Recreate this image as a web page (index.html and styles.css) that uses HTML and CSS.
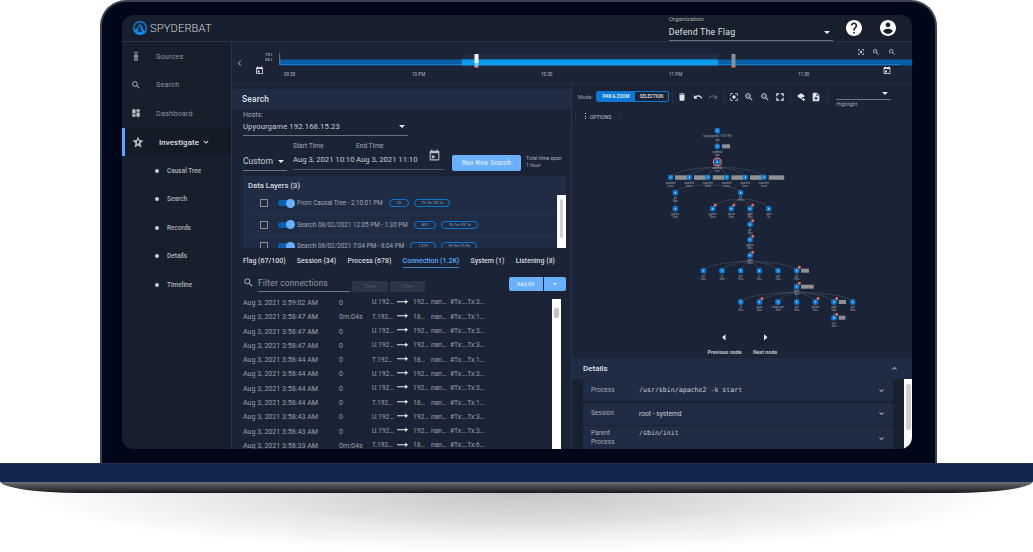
FILE: index.html
```html
<!DOCTYPE html>
<html lang="en">
<head>
    <meta charset="UTF-8">
    <title>Spyderbat</title>
    <link rel="stylesheet" href="styles.css">
</head>
<body>
    <svg class="defs" width="0" height="0">
        <symbol id="i-help" viewBox="2 2 20 20"><path d="M12 2C6.48 2 2 6.48 2 12s4.48 10 10 10 10-4.48 10-10S17.52 2 12 2zm1 17h-2v-2h2v2zm2.07-7.75l-.9.92C13.45 12.9 13 13.5 13 15h-2v-.5c0-1.1.45-2.1 1.17-2.83l1.24-1.26c.37-.36.59-.86.59-1.41 0-1.1-.9-2-2-2s-2 .9-2 2H8c0-2.21 1.79-4 4-4s4 1.79 4 4c0 .88-.36 1.68-.93 2.25z"/></symbol>
        <symbol id="i-account" viewBox="2 2 20 20"><path d="M12 2C6.48 2 2 6.48 2 12s4.48 10 10 10 10-4.48 10-10S17.52 2 12 2zm0 3c1.66 0 3 1.34 3 3s-1.34 3-3 3-3-1.34-3-3 1.34-3 3-3zm0 14.2c-2.5 0-4.71-1.28-6-3.22.03-1.99 4-3.08 6-3.08 1.99 0 5.97 1.09 6 3.08-1.29 1.94-3.5 3.22-6 3.22z"/></symbol>
        <symbol id="i-search" viewBox="0 0 24 24"><path d="M15.5 14h-.79l-.28-.27C15.41 12.59 16 11.11 16 9.5 16 5.91 13.09 3 9.5 3S3 5.91 3 9.5 5.91 16 9.5 16c1.61 0 3.09-.59 4.23-1.57l.27.28v.79l5 4.99L20.49 19l-4.99-5zm-6 0C7.01 14 5 11.99 5 9.5S7.01 5 9.5 5 14 7.01 14 9.5 11.99 14 9.5 14z"/></symbol>
        <symbol id="i-zoomin" viewBox="0 0 24 24"><path d="M15.5 14h-.79l-.28-.27C15.41 12.59 16 11.11 16 9.5 16 5.91 13.09 3 9.5 3S3 5.91 3 9.5 5.91 16 9.5 16c1.61 0 3.09-.59 4.23-1.57l.27.28v.79l5 4.99L20.49 19l-4.99-5zm-6 0C7.01 14 5 11.99 5 9.5S7.01 5 9.5 5 14 7.01 14 9.5 11.99 14 9.5 14zM12 10h-2v2H9v-2H7V9h2V7h1v2h2v1z"/></symbol>
        <symbol id="i-zoomout" viewBox="0 0 24 24"><path d="M15.5 14h-.79l-.28-.27C15.41 12.59 16 11.11 16 9.5 16 5.91 13.09 3 9.5 3S3 5.91 3 9.5 5.91 16 9.5 16c1.61 0 3.09-.59 4.23-1.57l.27.28v.79l5 4.99L20.49 19l-4.99-5zm-6 0C7.01 14 5 11.99 5 9.5S7.01 5 9.5 5 14 7.01 14 9.5 11.99 14 9.5 14zM7 9h5v1H7z"/></symbol>
        <symbol id="i-fit" viewBox="0 0 24 24"><path d="M5 15H3v4c0 1.1.9 2 2 2h4v-2H5v-4zM5 5h4V3H5c-1.1 0-2 .9-2 2v4h2V5zm14-2h-4v2h4v4h2V5c0-1.1-.9-2-2-2zm0 16h-4v2h4c1.1 0 2-.9 2-2v-4h-2v4zM12 8c-2.2 0-4 1.8-4 4s1.8 4 4 4 4-1.8 4-4-1.8-4-4-4z"/></symbol>
        <symbol id="i-expand" viewBox="0 0 24 24"><path d="M3 3h7v3H6v4H3V3zm11 0h7v7h-3V6h-4V3zM3 14h3v4h4v3H3v-7zm15 0h3v7h-7v-3h4v-4z"/></symbol>
        <symbol id="i-event" viewBox="0 0 24 24"><path d="M7 12h5v5H7zM16 1v2H8V1H6v2H5c-1.11 0-1.99.9-1.99 2L3 19c0 1.1.89 2 2 2h14c1.1 0 2-.9 2-2V5c0-1.1-.9-2-2-2h-1V1h-2zm3 18H5V8h14v11z"/></symbol>
        <symbol id="i-trash" viewBox="0 0 24 24"><path d="M6 19c0 1.1.9 2 2 2h8c1.1 0 2-.9 2-2V7H6v12zM19 4h-3.5l-1-1h-5l-1 1H5v2h14V4z"/></symbol>
        <symbol id="i-undo" viewBox="0 0 24 24"><path d="M12.5 8c-2.65 0-5.05.99-6.9 2.6L2 7v9h9l-3.62-3.62c1.39-1.16 3.16-1.88 5.12-1.88 3.54 0 6.55 2.31 7.6 5.5l2.37-.78C21.08 11.03 17.15 8 12.5 8z"/></symbol>
        <symbol id="i-redo" viewBox="0 0 24 24"><path d="M18.4 10.6C16.55 8.99 14.15 8 11.5 8c-4.65 0-8.58 3.03-9.96 7.22L3.9 16c1.05-3.19 4.05-5.5 7.6-5.5 1.95 0 3.73.72 5.12 1.88L13 16h9V7l-3.6 3.6z"/></symbol>
        <symbol id="i-layer" viewBox="0 0 24 24"><path d="M12 3l8 5v4h-5v4h-3l-8-4V8zM17 14h2v3h3v2h-3v3h-2v-3h-3v-2h3z"/></symbol>
        <symbol id="i-doc" viewBox="0 0 24 24"><path d="M14 2H6c-1.1 0-1.99.9-1.99 2L4 20c0 1.1.89 2 1.99 2H18c1.1 0 2-.9 2-2V8l-6-6zm2 14h-3v3h-2v-3H8v-2h3v-3h2v3h3v2zm-3-7V3.5L18.5 9H13z"/></symbol>
        <symbol id="i-dash" viewBox="0 0 24 24"><path d="M3 13h8V3H3v10zm0 8h8v-6H3v6zm10 0h8V11h-8v10zm0-18v6h8V3h-8z"/></symbol>
        <symbol id="i-down" viewBox="0 0 24 24"><path d="M16.59 8.59L12 13.17 7.41 8.59 6 10l6 6 6-6z"/></symbol>
        <symbol id="i-up" viewBox="0 0 24 24"><path d="M12 8l-6 6 1.41 1.41L12 10.83l4.59 4.58L18 14z"/></symbol>
        <symbol id="i-arrow" viewBox="0 0 24 12"><path d="M0 5h18V1l6 5-6 5V7H0z"/></symbol>
        <symbol id="i-sources" viewBox="0 0 24 24"><path d="M8 8h8v15H8zM10.5 10v3h3v-3zM10.5 15v6h3v-6zM12 4c-2 0-3.6.6-4.8 1.6l-1-1C7.8 3.2 9.8 2.5 12 2.5s4.2.7 5.8 2.1l-1 1C15.6 4.6 14 4 12 4z"/></symbol>
        <symbol id="i-star" viewBox="0 0 24 24"><path d="M12 1l3 7 8 1-6 5.5L19 23l-7-4-7 4 2-8.5L1 9l8-1zM12 7l-2.5 5 2.5 5 2.5-5z"/></symbol>
        <symbol id="i-node" viewBox="-3 -3 6 6"><circle r="2.9" fill="#0a78d4"/><circle r=".8" fill="#cfe6fb"/></symbol>
    </svg>

    <div class="lid">
        <div class="screen">
            <header class="topbar">
                <svg class="logo" viewBox="0 0 24 24">
                    <circle cx="12" cy="12" r="12" fill="#0a8ae6"/>
                    <circle cx="12" cy="12" r="10" fill="#12263f"/>
                    <path fill="#0a8ae6" d="M2 14c3 1 5-1 6-3l4-8 1 4 4 3-1 3 4 5 3 0c-2 4-6 6-11 6-6 0-9-4-10-10z"/>
                    <path fill="#12263f" d="M11 7l1 3 2 1-1 3 3 4-6 1-2-3 2-5z"/>
                </svg>
                <span class="brand">SPYDERBAT</span>
                <div class="org">
                    <span class="org-label">Organization</span>
                    <div class="org-select">Defend The Flag<i class="caret"></i></div>
                </div>
                <svg class="top-ic help"><use href="#i-help"/></svg>
                <svg class="top-ic account"><use href="#i-account"/></svg>
            </header>

            <div class="body">
                <nav class="side">
                    <a class="nav"><svg class="nav-ic"><use href="#i-sources"/></svg>Sources</a>
                    <a class="nav"><svg class="nav-ic"><use href="#i-search"/></svg>Search</a>
                    <a class="nav"><svg class="nav-ic"><use href="#i-dash"/></svg>Dashboard</a>
                    <a class="nav active"><svg class="nav-ic"><use href="#i-star"/></svg>Investigate<svg class="nav-chev"><use href="#i-down"/></svg></a>
                    <a class="sub">Causal Tree</a>
                    <a class="sub">Search</a>
                    <a class="sub">Records</a>
                    <a class="sub">Details</a>
                    <a class="sub">Timeline</a>
                </nav>

                <main class="main">
                    <svg class="timeline" viewBox="232 41 680 42">
                        <rect x="462" y="53" width="256" height="5" fill="#1f2c44"/>
                        <rect x="280" y="58.5" width="632" height="6" fill="#065ea8"/>
                        <rect x="462" y="58.5" width="256" height="6" fill="#0b9df0"/>
                        <rect x="280" y="63" width="620" height=".6" fill="#3a8fd6"/>
                        <rect x="279.5" y="52" width=".6" height="12" fill="#aab2bd"/>
                        <rect x="474.5" y="53" width="4" height="9" fill="#f4f6f8"/>
                        <rect x="474.5" y="62" width="4" height="4" fill="#7fc4f0"/>
                        <rect x="474.5" y="65.5" width="4" height="1.2" fill="#e8705f"/>
                        <rect x="731.5" y="53" width="4" height="12" fill="#8a8f98"/>
                        <rect x="731.5" y="65" width="4" height="1.5" fill="#e8705f"/>
                        <rect x="232" y="82.5" width="680" height=".8" fill="#2a3648"/>
                        <text class="tl-y" x="265" y="54.6">70 I</text>
                        <text class="tl-y" x="265" y="60">35 I</text>
                        <text class="tl-x" x="284" y="74.8">09:30</text>
                        <text class="tl-x" x="412" y="74.8">10 PM</text>
                        <text class="tl-x" x="541" y="74.8">10:30</text>
                        <text class="tl-x" x="669" y="74.8">11 PM</text>
                        <text class="tl-x" x="798" y="74.8">11:30</text>
                        <path class="tl-back" d="M240.8 59.8L238.4 62.2L240.8 64.6"/>
                        <use href="#i-event" class="ic-w" x="255" y="65" width="9" height="9"/>
                        <use href="#i-event" class="ic-w" x="882.5" y="65" width="9" height="9"/>
                        <use href="#i-fit" class="ic-g" x="857" y="47" width="8" height="8"/>
                        <use href="#i-zoomin" class="ic-g" x="872" y="47" width="8" height="8"/>
                        <use href="#i-zoomout" class="ic-g" x="888" y="47" width="8" height="8"/>
                    </svg>

                    <div class="work">
                        <section class="search">
                            <h2 class="band">Search</h2>
                            <div class="pad">
                                <label class="hosts-label">Hosts:</label>
                                <div class="hosts">Upyourgame 192.168.15.23<i class="caret"></i></div>
                                <div class="range">
                                    <div class="custom">Custom<i class="caret"></i></div>
                                    <div class="dates">
                                        <div class="date-labels"><span>Start Time</span><span>End Time</span></div>
                                        <div class="date-values"><span>Aug 3, 2021 10:10</span><span>Aug 3, 2021 11:10</span><svg class="cal"><use href="#i-event"/></svg></div>
                                    </div>
                                    <button class="run">Run New Search</button>
                                    <div class="span-note">Total time span<br>1 hour</div>
                                </div>
                                <div class="layers">
                                    <div class="layers-title">Data Layers (3)</div>
                                    <div class="layers-body">
                                        <div class="layer-list">
                                            <div class="layer"><i class="check"></i><i class="toggle"></i><span>From Causal Tree - 2:10:01 PM</span><b class="pill count">25</b><b class="pill">7h 7m 33.1s</b></div>
                                            <div class="layer"><i class="check"></i><i class="toggle"></i><span>Search 08/02/2021 12:05 PM - 1:30 PM</span><b class="pill count">857</b><b class="pill">7h 7m 33.1s</b></div>
                                            <div class="layer"><i class="check"></i><i class="toggle"></i><span>Search 08/02/2021 7:04 PM - 8:04 PM</span><b class="pill count">1,329</b><b class="pill">7h 9m 15.9s</b></div>
                                        </div>
                                        <div class="scroll"><i class="thumb-long"></i></div>
                                    </div>
                                </div>
                                <div class="tabs">
                                    <a>Flag (67/100)</a><a>Session (34)</a><a>Process (678)</a><a class="on">Connection (1.2K)</a><a>System (1)</a><a>Listening (8)</a>
                                </div>
                                <div class="filter">
                                    <svg class="filter-ic"><use href="#i-search"/></svg>
                                    <div class="filter-input">Filter connections</div>
                                    <button class="ghost">Save</button>
                                    <button class="ghost">Clear</button>
                                    <div class="add"><button>Add All</button><button class="add-more"><i class="caret"></i></button></div>
                                </div>
                                <div class="conns">
                                    <div class="conn-list">
                                        <div class="conn"><span>Aug 3, 2021 3:59:02 AM</span><span>0</span><span>U.192…</span><svg class="arrow"><use href="#i-arrow"/></svg><span>192…</span><span>nan…</span><span>#Tx:…Tx:3…</span></div>
                                        <div class="conn"><span>Aug 3, 2021 3:58:47 AM</span><span>0m:04s</span><span>T.192…</span><svg class="arrow"><use href="#i-arrow"/></svg><span>18…</span><span>nan…</span><span>#Tx:…Tx:1…</span></div>
                                        <div class="conn"><span>Aug 3, 2021 3:58:47 AM</span><span>0</span><span>U.192…</span><svg class="arrow"><use href="#i-arrow"/></svg><span>192…</span><span>nan…</span><span>#Tx:…Tx:3…</span></div>
                                        <div class="conn"><span>Aug 3, 2021 3:58:47 AM</span><span>0</span><span>U.192…</span><svg class="arrow"><use href="#i-arrow"/></svg><span>192…</span><span>nan…</span><span>#Tx:…Tx:3…</span></div>
                                        <div class="conn"><span>Aug 3, 2021 3:58:44 AM</span><span>0</span><span>T.192…</span><svg class="arrow"><use href="#i-arrow"/></svg><span>18…</span><span>nan…</span><span>#Tx:…Tx:1…</span></div>
                                        <div class="conn"><span>Aug 3, 2021 3:58:44 AM</span><span>0</span><span>U.192…</span><svg class="arrow"><use href="#i-arrow"/></svg><span>192…</span><span>nan…</span><span>#Tx:…Tx:3…</span></div>
                                        <div class="conn"><span>Aug 3, 2021 3:58:44 AM</span><span>0</span><span>U.192…</span><svg class="arrow"><use href="#i-arrow"/></svg><span>192…</span><span>nan…</span><span>#Tx:…Tx:3…</span></div>
                                        <div class="conn"><span>Aug 3, 2021 3:58:44 AM</span><span>0</span><span>T.192…</span><svg class="arrow"><use href="#i-arrow"/></svg><span>18…</span><span>nan…</span><span>#Tx:…Tx:1…</span></div>
                                        <div class="conn"><span>Aug 3, 2021 3:58:43 AM</span><span>0</span><span>U.192…</span><svg class="arrow"><use href="#i-arrow"/></svg><span>192…</span><span>nan…</span><span>#Tx:…Tx:3…</span></div>
                                        <div class="conn"><span>Aug 3, 2021 3:58:43 AM</span><span>0</span><span>U.192…</span><svg class="arrow"><use href="#i-arrow"/></svg><span>192…</span><span>nan…</span><span>#Tx:…Tx:3…</span></div>
                                        <div class="conn"><span>Aug 3, 2021 3:58:33 AM</span><span>0m:04s</span><span>T.192…</span><svg class="arrow"><use href="#i-arrow"/></svg><span>18…</span><span>nan…</span><span>#Tx:…Tx:6…</span></div>
                                    </div>
                                    <div class="conn-scroll"><i class="thumb-short"></i></div>
                                </div>
                            </div>
                        </section>

                        <section class="graph">
                            <div class="toolbar">
                                <span class="mode-label">Mode:</span>
                                <div class="mode"><span class="mode-on">PAN &amp; ZOOM</span><span>SELECTION</span></div>
                                <i class="tsep"></i>
                                <span class="tbtn"><svg><use href="#i-trash"/></svg></span>
                                <span class="tbtn"><svg><use href="#i-undo"/></svg></span>
                                <span class="tbtn dim"><svg><use href="#i-redo"/></svg></span>
                                <i class="tsep"></i>
                                <span class="tbtn"><svg><use href="#i-fit"/></svg></span>
                                <span class="tbtn"><svg><use href="#i-zoomin"/></svg></span>
                                <span class="tbtn"><svg><use href="#i-zoomout"/></svg></span>
                                <span class="tbtn"><svg><use href="#i-expand"/></svg></span>
                                <i class="tsep"></i>
                                <span class="tbtn"><svg><use href="#i-layer"/></svg></span>
                                <span class="tbtn"><svg><use href="#i-doc"/></svg></span>
                                <i class="tsep"></i>
                                <div class="highlight"><div class="hl-select"><i class="caret"></i></div><span>Highlight</span></div>
                            </div>
                            <div class="options"><span class="opt-box"><i class="dots"></i>OPTIONS</span></div>

                            <svg class="tree" viewBox="572 124 340 233">
                                <g class="edges">
                                    <path d="M717.3 130V161"/>
                                    <path d="M717.3 166Q680 167 670.7 176"/>
                                    <path d="M717.3 166Q695 168 689.3 176"/>
                                    <path d="M717.3 166Q710 168 708 176"/>
                                    <path d="M717.3 166Q724 168 726.7 176"/>
                                    <path d="M717.3 166Q740 168 745.3 176"/>
                                    <path d="M717.3 166Q755 167 764 176"/>
                                    <path d="M708 184Q680 184 675.3 191.7"/>
                                    <path d="M708 184Q735 184 740.7 191.7"/>
                                    <path d="M675.3 192V207.7"/>
                                    <path d="M740.7 198Q716 199 712.7 207.7"/>
                                    <path d="M740.7 198Q733 200 731.3 207.7"/>
                                    <path d="M740.7 198Q748 200 750 207.7"/>
                                    <path d="M740.7 198Q765 199 768.7 207.7"/>
                                    <path d="M750 208V254"/>
                                    <path d="M750 260Q708 262 703.3 269.7"/>
                                    <path d="M750 260Q725 263 722 269.7"/>
                                    <path d="M750 260Q742 264 740.7 269.7"/>
                                    <path d="M750 260Q757 264 759.3 269.7"/>
                                    <path d="M750 260Q775 263 778 269.7"/>
                                    <path d="M750 260Q790 262 796.7 269.7"/>
                                    <path d="M796.7 270V285.7"/>
                                    <path d="M796.7 291Q746 293 740.7 301"/>
                                    <path d="M796.7 291Q763 294 759.3 301"/>
                                    <path d="M796.7 291Q781 295 778 301"/>
                                    <path d="M796.7 291V301"/>
                                    <path d="M796.7 291Q812 295 815.3 301"/>
                                    <path d="M796.7 291Q830 294 834 301"/>
                                    <path d="M796.7 291Q848 293 852.7 301"/>
                                    <path d="M834 301V316.7"/>
                                </g>

                                <circle cx="717.3" cy="161" r="3.9" fill="none" stroke="#e8705f" stroke-width="1.3"/>

                                <g class="tags">
                                    <rect x="722" y="143.3" width="8" height="4"/>
                                    <rect x="675" y="174.3" width="13" height="4.5"/>
                                    <rect x="694" y="174.3" width="12.5" height="4.5"/>
                                    <rect x="712.7" y="174.3" width="12.5" height="4.5"/>
                                    <rect x="731.3" y="174.3" width="12.5" height="4.5"/>
                                    <rect x="750" y="174.3" width="12.5" height="4.5"/>
                                    <rect x="768.7" y="174.3" width="15.5" height="4.5"/>
                                    <rect x="801" y="267.7" width="8" height="4"/>
                                    <rect x="801" y="283.7" width="12.7" height="4"/>
                                    <rect x="838.7" y="299" width="7.3" height="4"/>
                                    <rect x="838.7" y="314.7" width="6.7" height="4"/>
                                </g>

                                <g class="nodes">
                                    <use href="#i-node" x="714.3" y="126.7" width="6" height="6"/>
                                    <use href="#i-node" x="714.3" y="142.3" width="6" height="6"/>
                                    <use href="#i-node" x="714.3" y="158" width="6" height="6"/>
                                    <use href="#i-node" x="667.7" y="173.3" width="6" height="6"/>
                                    <use href="#i-node" x="686.3" y="173.3" width="6" height="6"/>
                                    <use href="#i-node" x="705" y="173.3" width="6" height="6"/>
                                    <use href="#i-node" x="723.7" y="173.3" width="6" height="6"/>
                                    <use href="#i-node" x="742.3" y="173.3" width="6" height="6"/>
                                    <use href="#i-node" x="761" y="173.3" width="6" height="6"/>
                                    <use href="#i-node" x="672.3" y="188.7" width="6" height="6"/>
                                    <use href="#i-node" x="737.7" y="188.7" width="6" height="6"/>
                                    <use href="#i-node" x="672.3" y="204.7" width="6" height="6"/>
                                    <use href="#i-node" x="709.7" y="204.7" width="6" height="6"/>
                                    <use href="#i-node" x="728.3" y="204.7" width="6" height="6"/>
                                    <use href="#i-node" x="747" y="204.7" width="6" height="6"/>
                                    <use href="#i-node" x="765.7" y="204.7" width="6" height="6"/>
                                    <use href="#i-node" x="747" y="220.3" width="6" height="6"/>
                                    <use href="#i-node" x="747" y="235.7" width="6" height="6"/>
                                    <use href="#i-node" x="747" y="251.3" width="6" height="6"/>
                                    <use href="#i-node" x="700.3" y="266.7" width="6" height="6"/>
                                    <use href="#i-node" x="719" y="266.7" width="6" height="6"/>
                                    <use href="#i-node" x="737.7" y="266.7" width="6" height="6"/>
                                    <use href="#i-node" x="756.3" y="266.7" width="6" height="6"/>
                                    <use href="#i-node" x="775" y="266.7" width="6" height="6"/>
                                    <use href="#i-node" x="793.7" y="266.7" width="6" height="6"/>
                                    <use href="#i-node" x="793.7" y="282.7" width="6" height="6"/>
                                    <use href="#i-node" x="737.7" y="298" width="6" height="6"/>
                                    <use href="#i-node" x="756.3" y="298" width="6" height="6"/>
                                    <use href="#i-node" x="775" y="298" width="6" height="6"/>
                                    <use href="#i-node" x="793.7" y="298" width="6" height="6"/>
                                    <use href="#i-node" x="812.3" y="298" width="6" height="6"/>
                                    <use href="#i-node" x="831" y="298" width="6" height="6"/>
                                    <use href="#i-node" x="849.7" y="298" width="6" height="6"/>
                                    <use href="#i-node" x="831" y="313.7" width="6" height="6"/>
                                </g>

                                <g class="flags">
                                    <rect x="714" y="202.8" width="2.6" height="2.6"/>
                                    <rect x="732.6" y="202.8" width="2.6" height="2.6"/>
                                    <rect x="751.4" y="202.8" width="2.6" height="2.6"/>
                                    <rect x="751.4" y="218.4" width="2.6" height="2.6"/>
                                    <rect x="751.4" y="234" width="2.6" height="2.6"/>
                                    <rect x="751.4" y="250" width="2.6" height="2.6"/>
                                    <rect x="798" y="265" width="2.6" height="2.6"/>
                                    <rect x="798" y="281" width="2.6" height="2.6"/>
                                    <rect x="760.7" y="296.2" width="2.6" height="2.6"/>
                                    <rect x="816.7" y="296.2" width="2.6" height="2.6"/>
                                    <rect x="835.4" y="296.2" width="2.6" height="2.6"/>
                                    <rect x="835.4" y="312" width="2.6" height="2.6"/>
                                </g>

                                <g class="labels">
                                    <text x="717.3" y="136">Upyourgame 2:10:01 PM</text><text x="717.3" y="139.5">root</text>
                                    <text x="717.3" y="151.5">systemd</text><text x="717.3" y="155">root</text>
                                    <text x="717.3" y="167.5">apache2</text><text x="717.3" y="170.5">root</text>
                                    <text x="670.7" y="182.5">apache2</text><text x="670.7" y="185.5">www</text>
                                    <text x="689.3" y="182.5">apache2</text><text x="689.3" y="185.5">www</text>
                                    <text x="708" y="182.5">apache2</text><text x="708" y="185.5">www</text>
                                    <text x="726.7" y="182.5">apache2</text><text x="726.7" y="185.5">www</text>
                                    <text x="745.3" y="182.5">apache2</text><text x="745.3" y="185.5">www</text>
                                    <text x="764" y="182.5">apache2</text><text x="764" y="185.5">www</text>
                                    <text x="675.3" y="198">sh</text><text x="675.3" y="201">0hrs</text>
                                    <text x="740.7" y="197">sh</text><text x="740.7" y="200">0hrs</text>
                                    <text x="675.3" y="214">python</text><text x="675.3" y="217">0hrs</text>
                                    <text x="712.7" y="214">python</text><text x="712.7" y="217">0hrs</text>
                                    <text x="731.3" y="214">netcat</text><text x="731.3" y="217">0hrs</text>
                                    <text x="750" y="213.5">wget</text><text x="750" y="216.5">0hrs</text>
                                    <text x="768.7" y="214">cron</text><text x="768.7" y="217">0s</text>
                                    <text x="750" y="229.5">sh</text><text x="750" y="232.5">0hrs</text>
                                    <text x="750" y="245">python</text><text x="750" y="248">0hrs</text>
                                    <text x="750" y="260">bash</text><text x="750" y="263">0hrs</text>
                                    <text x="703.3" y="276">ctf</text><text x="703.3" y="279">0hrs</text>
                                    <text x="722" y="276">ls</text><text x="722" y="279">0hrs</text>
                                    <text x="740.7" y="276">cat</text><text x="740.7" y="279">0hrs</text>
                                    <text x="759.3" y="276">ls</text><text x="759.3" y="279">0hrs</text>
                                    <text x="778" y="276">cat</text><text x="778" y="279">0hrs</text>
                                    <text x="796.7" y="276">su</text><text x="796.7" y="279">0hrs</text>
                                    <text x="796.7" y="291">bash</text><text x="796.7" y="294">0hrs</text>
                                    <text x="740.7" y="307">id</text><text x="740.7" y="310">0hrs</text>
                                    <text x="759.3" y="307">sudo</text><text x="759.3" y="310">0hrs</text>
                                    <text x="778" y="307">netcat-gen</text><text x="778" y="310">0hrs</text>
                                    <text x="796.7" y="307">cat</text><text x="796.7" y="310">0hrs</text>
                                    <text x="815.3" y="307">chmod</text><text x="815.3" y="310">0hrs</text>
                                    <text x="834" y="307">sudo</text><text x="834" y="310">0hrs</text>
                                    <text x="852.7" y="307">cat</text><text x="852.7" y="310">0hrs</text>
                                    <text x="834" y="323">su</text><text x="834" y="326">0hrs</text>
                                </g>

                                <path class="step" d="M725.5 333.2V339.4L722 336.3z"/>
                                <path class="step" d="M764 333.2V339.4L767.5 336.3z"/>
                                <text class="step-label" x="724.5" y="353">Previous node</text>
                                <text class="step-label" x="765" y="353">Next node</text>
                            </svg>

                            <div class="details-head"><span>Details</span><svg><use href="#i-up"/></svg></div>
                            <div class="details">
                                <div class="detail-list">
                                    <div class="detail"><span class="d-key">Process</span><code class="d-val">/usr/sbin/apache2 -k start</code><svg><use href="#i-down"/></svg></div>
                                    <div class="detail"><span class="d-key">Session</span><span class="d-val">root - systemd</span><svg><use href="#i-down"/></svg></div>
                                    <div class="detail tall"><span class="d-key">Parent<br>Process</span><code class="d-val top">/sbin/init</code><svg><use href="#i-down"/></svg></div>
                                </div>
                                <div class="detail-scroll"><i class="thumb-detail"></i></div>
                            </div>
                        </section>
                    </div>
                </main>
            </div>
        </div>
    </div>
    <div class="base"></div>
    <div class="floor"></div>
</body>
</html>
```

FILE: styles.css
```css
* {
    box-sizing: border-box;
}
html, body {
    height: 552px;
}
body {
    margin: 0;
    background: #FFFFFF;
    font-family: Roboto, sans-serif;
    overflow: hidden;
    color: #D5D9DE;
}
i {
    display: block;
}
.defs {
    display: block;
    height: 0;
}
.caret {
    width: 0;
    height: 0;
    border-left: 3px solid transparent;
    border-right: 3px solid transparent;
    border-top: 3px solid #E8EAED;
}

/* laptop shell */
.lid {
    width: 837px;
    height: 463px;
    margin-left: 100px;
    padding: 13px 23px 14px 20px;
    background: #01071A;
    border: 2px solid #3B4353;
    border-bottom: none;
    border-radius: 26px 26px 0 0;
}
.base {
    height: 30px;
    background: linear-gradient(#2A3A5E 0, #12264F 1px, #12264F 18.5px, #6C7076 19px, #16181C 30px);
    border-radius: 0 0 80px 80px / 0 0 12px 12px;
}
.floor {
    height: 59px;
    background:
        radial-gradient(ellipse 24% 65% at 50% 0, rgba(0, 0, 0, 0.1), rgba(0, 0, 0, 0) 100%),
        radial-gradient(ellipse 48% 100% at 50% 0, rgba(0, 0, 0, 0.14), rgba(0, 0, 0, 0.11) 50%, rgba(0, 0, 0, 0) 100%);
}
.screen {
    height: 434px;
    display: flex;
    flex-direction: column;
    background: #1A2436;
    border-radius: 12px;
    overflow: hidden;
}

/* top bar */
.topbar {
    flex: 0 0 26px;
    display: flex;
    align-items: center;
    padding: 0 15.5px 0 11px;
    background: #171F2C;
    border-bottom: 1px solid #2A3648;
}
.logo {
    width: 14px;
    height: 14px;
}
.brand {
    margin-left: 3px;
    font-size: 11.2px;
    letter-spacing: 0.1px;
    font-weight: 300;
    color: #D0D3D8;
}
.org {
    width: 164px;
    margin-left: 457px;
    align-self: flex-start;
}
.org-label {
    display: block;
    font-size: 6.2px;
    line-height: 8px;
    color: #A9AEB6;
}
.org-select {
    display: flex;
    align-items: center;
    justify-content: space-between;
    height: 18px;
    padding: 1px 3px 0 0;
    font-size: 8.8px;
    letter-spacing: 0.2px;
    border-bottom: 1px solid #6B7280;
    color: #DDE0E4;
}
.top-ic {
    width: 16px;
    height: 16px;
    fill: #FFFFFF;
}
.help {
    margin-left: 13px;
}
.account {
    margin-left: 18.5px;
}

.body {
    flex: 1;
    display: flex;
    min-height: 0;
}

/* sidebar */
.side {
    flex: 0 0 110px;
    background: #171F2C;
    border-right: 1px solid #2A3648;
}
.nav, .sub {
    display: flex;
    align-items: center;
    height: 28.6px;
}
.nav {
    padding-left: 9px;
    font-size: 7.4px;
    letter-spacing: 0.1px;
    color: #8D939C;
}
.nav-ic {
    width: 10px;
    height: 10px;
    margin-right: 15px;
    fill: #B9BDC4;
}
.nav.active {
    background: #141B27;
    border-left: 3px solid #5AA7FF;
    padding-left: 8px;
    font-size: 7.9px;
    color: #DDE0E4;
    font-weight: 500;
}
.nav.active .nav-ic {
    width: 12px;
    height: 12px;
    margin: 0 15px 0 -1px;
}
.nav-chev {
    width: 10px;
    height: 10px;
    margin-left: 2px;
    fill: #DDE0E4;
}
.sub {
    padding-left: 33px;
    font-size: 6.5px;
    font-weight: 500;
    color: #AEB3BA;
}
.sub::before {
    content: '';
    width: 4px;
    height: 4px;
    margin-right: 8px;
    border-radius: 50%;
    background: #C9CDD2;
}

/* main column */
.main {
    flex: 1;
    display: flex;
    flex-direction: column;
    min-width: 0;
}
.timeline {
    display: block;
    flex: 0 0 42px;
    width: 680px;
    height: 42px;
}
.tl-y {
    font-size: 4.4px;
    fill: #D0D3D8;
}
.tl-x {
    font-size: 4.6px;
    fill: #B8BCC2;
}
.tl-back {
    fill: none;
    stroke: #E8EAED;
    stroke-width: 0.8;
}
.ic-w {
    fill: #E8EAED;
}
.ic-g {
    fill: #C2C6CC;
}
.work {
    flex: 1;
    display: flex;
    min-height: 0;
}

/* search panel */
.search {
    flex: 0 0 340px;
    padding-top: 5px;
    border-right: 1px solid #2A3648;
    overflow: hidden;
}
.band {
    height: 20px;
    margin: 0;
    padding-left: 10px;
    background: #1F2C44;
    font-size: 8.4px;
    font-weight: 500;
    letter-spacing: 0.2px;
    line-height: 20px;
    color: #DFE3E8;
}
.pad {
    padding: 1.5px 5.5px 0 11px;
}
.hosts-label {
    display: block;
    font-size: 6.8px;
    line-height: 8px;
    color: #A9AEB6;
}
.hosts {
    display: flex;
    align-items: center;
    justify-content: space-between;
    width: 164.5px;
    height: 14.5px;
    margin-top: 2.5px;
    padding: 0 3px 2px 0;
    font-size: 7.7px;
    letter-spacing: 0.1px;
    border-bottom: 1px solid #6B7280;
    color: #C9CDD3;
}
.range {
    display: flex;
    align-items: flex-end;
    margin-top: 6px;
    height: 29px;
}
.custom {
    display: flex;
    align-items: center;
    justify-content: space-between;
    width: 44px;
    height: 18px;
    padding: 0 3px 0 0;
    font-size: 8.6px;
    border-bottom: 1px solid #6B7280;
    color: #C9CDD3;
}
.dates {
    width: 151px;
    margin: 0 0 1px 6px;
}
.date-labels {
    display: flex;
    font-size: 6.6px;
    line-height: 8px;
    color: #A9AEB6;
}
.date-labels span, .date-values span {
    width: 63px;
}
.date-values {
    display: flex;
    align-items: center;
    height: 20px;
    font-size: 7.7px;
    white-space: nowrap;
    border-bottom: 1px solid #4A5566;
    color: #C9CDD3;
}
.cal {
    width: 13px;
    height: 13px;
    margin: -8px 0 0 9px;
    fill: #B9BDC4;
}
.run {
    width: 69px;
    height: 16px;
    margin: 0 0 0 8px;
    padding: 0;
    border: none;
    border-radius: 2px;
    background: #6AB0FF;
    color: #CFE4FF;
    font: 700 6.3px Roboto, sans-serif;
    letter-spacing: 0.2px;
}
.span-note {
    margin: 0 0 1px 5px;
    font-size: 5.2px;
    line-height: 7.5px;
    color: #A9AEB6;
    white-space: nowrap;
}
.layers {
    height: 72px;
    margin-top: 5px;
    background: #1F2C44;
    overflow: hidden;
}
.layers-title {
    height: 17.5px;
    padding: 5px 0 0 5px;
    font-size: 7.7px;
    line-height: 9px;
    font-weight: 500;
    color: #D5D9DE;
}
.layers-body {
    display: flex;
}
.layer-list {
    flex: 1;
}
.layer {
    display: flex;
    align-items: center;
    height: 21.5px;
    margin-left: 7px;
    padding-left: 10px;
    font-size: 6.3px;
    color: #A3A8B0;
    white-space: nowrap;
    border-bottom: 1px solid #263450;
}
.check {
    width: 8px;
    height: 8px;
    margin-right: 10px;
    border: 1px solid #8C9199;
}
.toggle {
    position: relative;
    width: 16px;
    height: 6px;
    margin-right: 3px;
    border-radius: 3px;
    background: #0B5FB0;
}
.toggle::after {
    content: '';
    position: absolute;
    right: -1px;
    top: -1.5px;
    width: 9px;
    height: 9px;
    border-radius: 50%;
    background: #6AB0FF;
}
.pill {
    height: 8px;
    margin-left: 5px;
    padding: 0 6px;
    border: 0.7px solid #0A78D4;
    border-radius: 4px;
    font-size: 4px;
    font-weight: 400;
    line-height: 6.6px;
    color: #7FA9D6;
}
.pill.count {
    margin-left: 6px;
    padding: 0 7px;
}
.scroll {
    flex: 0 0 9px;
    height: 60px;
    margin-top: 1.5px;
    padding: 4px 2.5px 0 3px;
    background: #FFFFFF;
}
.thumb-long {
    height: 39px;
    border-radius: 2px;
    background: #CDCFD2;
}
.tabs {
    display: flex;
    gap: 11.2px;
    height: 13px;
    margin-top: 7px;
    font-size: 7px;
    font-weight: 500;
    line-height: 12px;
    color: #D5D9DE;
    white-space: nowrap;
}
.tabs .on {
    color: #5AA7FF;
    border-bottom: 1px solid #3B7FC4;
}
.filter {
    display: flex;
    align-items: flex-start;
    height: 15px;
    margin-top: 9px;
}
.filter-ic {
    width: 11px;
    height: 11px;
    fill: #C2C6CC;
}
.filter-input {
    width: 92px;
    height: 15px;
    margin-left: 4px;
    font-size: 8.4px;
    line-height: 13px;
    letter-spacing: 0.2px;
    color: #94999F;
    border-bottom: 1px solid #6B7280;
}
.ghost {
    width: 36px;
    height: 11px;
    margin: 4px 0 0 2px;
    padding: 0;
    border: none;
    border-radius: 2px;
    background: #2A3648;
    color: #445063;
    font: 500 5px Roboto, sans-serif;
}
.ghost + .ghost {
    width: 35px;
}
.add {
    display: flex;
    margin-left: auto;
    gap: 1px;
}
.add button {
    width: 34px;
    height: 14.5px;
    padding: 0;
    border: none;
    border-radius: 2px 0 0 2px;
    background: #6AB0FF;
    color: #CFE4FF;
    font: 700 5.4px Roboto, sans-serif;
}
.add .add-more {
    width: 22px;
    border-radius: 0 2px 2px 0;
}
.add-more .caret {
    margin: 0 auto;
    border-top-color: #FFFFFF;
    border-left-width: 2.5px;
    border-right-width: 2.5px;
    border-top-width: 2px;
}
.conns {
    display: flex;
    margin-top: 3.8px;
}
.conn-list {
    width: 309px;
}
.conn {
    display: flex;
    align-items: center;
    height: 14.3px;
    font-size: 7.1px;
    color: #9AA0A8;
    white-space: nowrap;
}
.conn span:nth-child(n+3) {
    font-size: 6.7px;
}
.conn span:nth-child(1) {
    width: 96px;
}
.conn span:nth-child(2) {
    width: 33px;
}
.conn span:nth-child(3) {
    width: 25px;
}
.conn span:nth-child(5) {
    width: 18px;
    margin-left: 5px;
}
.conn span:nth-child(6) {
    width: 19px;
}
.arrow {
    width: 11px;
    height: 5.5px;
    margin-top: -2px;
    fill: #E8EAED;
}
.conn-scroll {
    flex: 0 0 8.5px;
    height: 160px;
    margin-top: 4px;
    padding: 9px 2px 0;
    background: #FFFFFF;
}
.thumb-short {
    height: 10px;
    border-radius: 2px;
    background: #BFC2C6;
}

/* graph panel */
.graph {
    flex: 1;
    display: flex;
    flex-direction: column;
    min-width: 0;
}
.toolbar {
    display: flex;
    align-items: center;
    flex: 0 0 25px;
    padding: 0 0 0 6px;
}
.mode-label {
    width: 18px;
    font-size: 5.2px;
    color: #A3A8B0;
}
.mode {
    display: flex;
    width: 73px;
    height: 11px;
    border: 1px solid #0A78D4;
    border-radius: 2px;
    font-size: 4.5px;
    font-weight: 700;
    line-height: 9px;
    text-align: center;
    color: #C9CDD3;
}
.mode span {
    flex: 1;
}
.mode .mode-on {
    flex: 0 0 38px;
    background: #0A78D4;
    color: #DCEBFA;
}
.tsep {
    width: 1px;
    height: 13px;
    margin: 0 1.7px 0 3px;
    background: #263247;
}
.tbtn {
    display: flex;
    justify-content: center;
    width: 15.3px;
}
.tbtn svg {
    width: 10px;
    height: 10px;
    fill: #E2E4E8;
}
.tbtn.dim svg {
    fill: #5B6472;
}
.highlight {
    width: 55px;
    margin: 6px 0 0 7px;
    font-size: 5.2px;
    line-height: 8px;
    color: #A3A8B0;
}
.hl-select {
    display: flex;
    justify-content: flex-end;
    align-items: center;
    height: 9px;
    padding: 0 3px 4px;
    border-bottom: 1px solid #6B7280;
}
.options {
    display: flex;
    align-items: flex-start;
    flex: 0 0 16px;
    padding: 3px 0 0 3px;
}
.opt-box {
    display: flex;
    align-items: center;
    width: 46px;
    height: 9px;
    padding-left: 9px;
    font-size: 5.2px;
    color: #BFC3C9;
    border-left: 1px solid #263247;
    border-right: 1px solid #263247;
}
.dots {
    width: 1.2px;
    height: 7px;
    margin-right: 3.5px;
    background: repeating-linear-gradient(#E2E4E8 0, #E2E4E8 1.2px, transparent 1.2px, transparent 2.6px);
}
.tree {
    display: block;
    flex: 0 0 233px;
    width: 340px;
    height: 233px;
}
.edges path {
    fill: none;
    stroke: #4E5A6C;
    stroke-width: 0.5;
}
.tags rect {
    fill: #8E9093;
}
.flags rect {
    fill: #E8705F;
}
.labels text {
    font-size: 2.6px;
    fill: #A3A8B0;
    text-anchor: middle;
}
.step {
    fill: #E8EAED;
}
.step-label {
    font-size: 5.3px;
    font-weight: 700;
    fill: #BFC3C9;
    text-anchor: middle;
}
.details-head {
    display: flex;
    align-items: center;
    justify-content: space-between;
    flex: 0 0 21px;
    padding: 0 13px 0 11px;
    background: #1F2C44;
    font-size: 8px;
    font-weight: 500;
    color: #DFE3E8;
}
.details-head svg, .detail svg {
    width: 9px;
    height: 9px;
    fill: #DDE0E4;
}
.details {
    flex: 1;
    display: flex;
    min-height: 0;
}
.detail-list {
    width: 332px;
    padding: 0 11px;
    background: #18212F;
}
.detail {
    display: flex;
    align-items: center;
    height: 22px;
    margin-bottom: 1.5px;
    padding: 0 7px 0 8px;
    background: #1F2C44;
    border-radius: 2px;
    font-size: 6.5px;
    color: #A9AEB6;
}
.detail.tall {
    height: 24px;
    margin-bottom: 0;
}
.d-key {
    width: 48px;
    line-height: 8.6px;
}
.d-val {
    flex: 1;
    color: #C9CDD3;
    font-size: 6.7px;
}
code.d-val {
    font-family: "DejaVu Sans Mono", monospace;
    font-size: 6.6px;
}
.d-val.top {
    align-self: flex-start;
    padding-top: 3px;
}
.detail-scroll {
    flex: 0 0 8px;
    height: 70px;
    padding: 5px 1.5px 0 2px;
    background: #FFFFFF;
    border-radius: 0 0 8px 0;
}
.thumb-detail {
    height: 46px;
    border-radius: 2px;
    background: #CDCFD2;
}
```
